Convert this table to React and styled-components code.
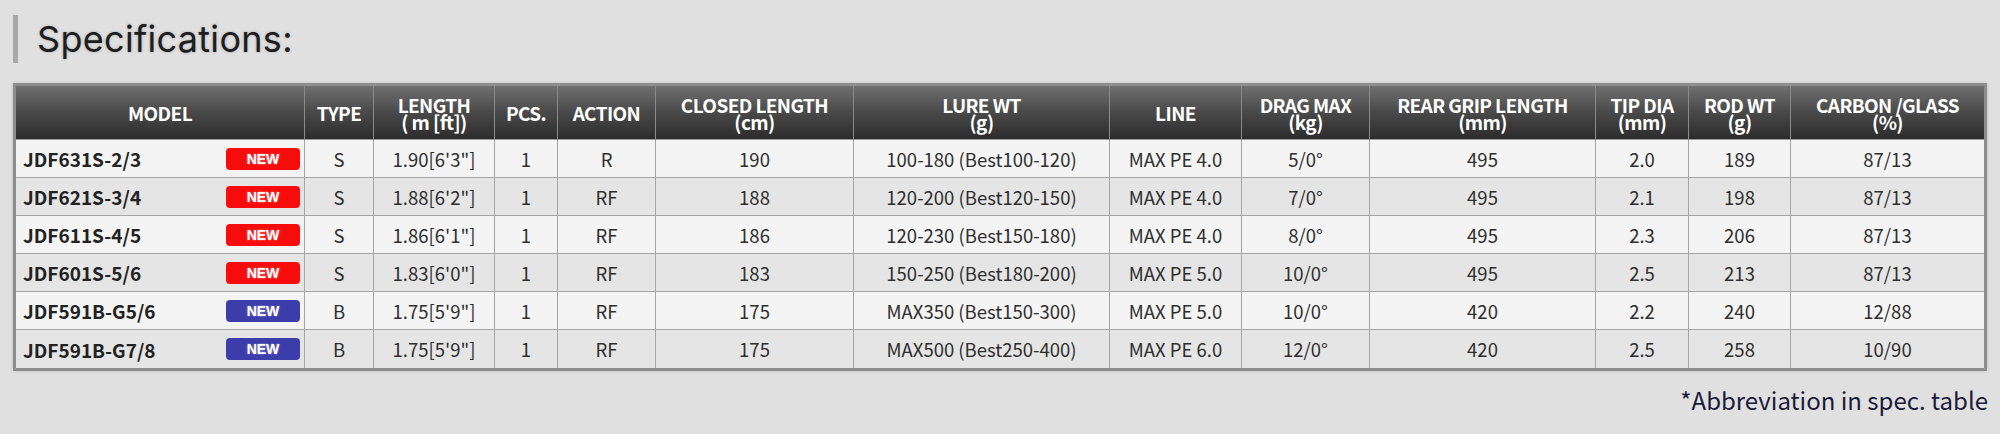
import React from 'react'
import styled, { createGlobalStyle } from 'styled-components'

const GlobalStyle = createGlobalStyle`
  body {
    margin: 0;
    background: #e0e0e0;
    font-family: "Noto Sans CJK JP", "Noto Sans", sans-serif;
  }
`

const Page = styled.div`
  padding: 15px 13px 0 13px;
`

const Title = styled.h2`
  margin: 0;
  height: 48px;
  display: flex;
  align-items: center;
  border-left: 5px solid #a8a8a8;
  padding-left: 19px;
  font-family: Inter, "Noto Sans", sans-serif;
  font-weight: 400;
  font-size: 36px;
  letter-spacing: 0.3px;
  color: #1e1e1e;
  text-shadow: 0 0 3px rgba(0, 0, 0, 0.25);
`

const Table = styled.table`
  margin-top: 20px;
  width: 1974px;
  table-layout: fixed;
  border-collapse: separate;
  border-spacing: 0;
  border: 3px solid #8e8e8e;
  box-shadow: 0 0 3px rgba(0, 0, 0, 0.15);
`

const HeadCell = styled.th`
  height: 54px;
  padding: 0 4px;
  box-sizing: border-box;
  background: linear-gradient(to bottom, #707070 0%, #4c4c4c 45%, #2c2c2c 100%);
  color: #fff;
  font-weight: 700;
  font-size: 19px;
  line-height: 17px;
  letter-spacing: -0.6px;
  text-align: center;
  vertical-align: middle;
  border-right: 1px solid #8a8a8a;
  border-bottom: 1px solid #9a9a9a;
  white-space: pre-line;

  &:last-child {
    border-right: none;
  }
`

const Row = styled.tr`
  background: ${p => (p.$odd ? '#f4f4f4' : '#e5e5e5')};

  &:last-child td {
    border-bottom: none;
  }
`

const Cell = styled.td`
  height: 38px;
  box-sizing: border-box;
  padding: 0 4px;
  text-align: center;
  vertical-align: middle;
  font-size: 18.5px;
  color: #2e2e2e;
  border-right: 1px solid #a6a6a6;
  border-bottom: 1px solid #a6a6a6;
  white-space: nowrap;

  &:last-child {
    border-right: none;
  }
`

const ModelCell = styled(Cell)`
  text-align: left;
  padding: 0 4px 0 7px;
`

const ModelInner = styled.div`
  display: flex;
  align-items: center;
  justify-content: space-between;
`

const ModelName = styled.span`
  font-weight: 700;
  color: #222;
  font-size: 19px;
`

const Badge = styled.span`
  width: 74px;
  height: 22px;
  border-radius: 4px;
  background: ${p => (p.$blue ? '#3333a8' : '#f80000')};
  color: #fff;
  font-family: "Liberation Sans", Arial, sans-serif;
  font-weight: 700;
  font-size: 14px;
  display: flex;
  align-items: center;
  justify-content: center;
  text-shadow: 0 0 2px rgba(255, 255, 255, 0.6);
  opacity: 0.95;
`

const Footnote = styled.p`
  margin: 11px 0 0 0;
  width: 1975px;
  text-align: right;
  font-size: 24px;
  color: #1a1a3a;
`

const columns = [
  { label: 'MODEL', width: 289 },
  { label: 'TYPE', width: 69 },
  { label: 'LENGTH\n( m [ft])', width: 121 },
  { label: 'PCS.', width: 63 },
  { label: 'ACTION', width: 98 },
  { label: 'CLOSED LENGTH\n(cm)', width: 198 },
  { label: 'LURE WT\n(g)', width: 256 },
  { label: 'LINE', width: 132 },
  { label: 'DRAG MAX\n(kg)', width: 128 },
  { label: 'REAR GRIP LENGTH\n(mm)', width: 226 },
  { label: 'TIP DIA\n(mm)', width: 93 },
  { label: 'ROD WT\n(g)', width: 102 },
  { label: 'CARBON /GLASS\n(%)', width: 193 },
]

const rows = [
  ['JDF631S-2/3', false, 'S', '1.90[6\'3"]', '1', 'R', '190', '100-180 (Best100-120)', 'MAX PE 4.0', '5/0°', '495', '2.0', '189', '87/13'],
  ['JDF621S-3/4', false, 'S', '1.88[6\'2"]', '1', 'RF', '188', '120-200 (Best120-150)', 'MAX PE 4.0', '7/0°', '495', '2.1', '198', '87/13'],
  ['JDF611S-4/5', false, 'S', '1.86[6\'1"]', '1', 'RF', '186', '120-230 (Best150-180)', 'MAX PE 4.0', '8/0°', '495', '2.3', '206', '87/13'],
  ['JDF601S-5/6', false, 'S', '1.83[6\'0"]', '1', 'RF', '183', '150-250 (Best180-200)', 'MAX PE 5.0', '10/0°', '495', '2.5', '213', '87/13'],
  ['JDF591B-G5/6', true, 'B', '1.75[5\'9"]', '1', 'RF', '175', 'MAX350 (Best150-300)', 'MAX PE 5.0', '10/0°', '420', '2.2', '240', '12/88'],
  ['JDF591B-G7/8', true, 'B', '1.75[5\'9"]', '1', 'RF', '175', 'MAX500 (Best250-400)', 'MAX PE 6.0', '12/0°', '420', '2.5', '258', '10/90'],
]

const App = () => (
  <Page>
    <GlobalStyle />
    <Title>Specifications:</Title>
    <Table>
      <colgroup>
        {columns.map(c => (
          <col key={c.label} style={{ width: c.width }} />
        ))}
      </colgroup>
      <thead>
        <tr>
          {columns.map(c => (
            <HeadCell key={c.label}>{c.label}</HeadCell>
          ))}
        </tr>
      </thead>
      <tbody>
        {rows.map(([model, blue, ...rest], i) => (
          <Row key={model} $odd={i % 2 === 0}>
            <ModelCell>
              <ModelInner>
                <ModelName>{model}</ModelName>
                <Badge $blue={blue}>NEW</Badge>
              </ModelInner>
            </ModelCell>
            {rest.map((v, j) => (
              <Cell key={j}>{v}</Cell>
            ))}
          </Row>
        ))}
      </tbody>
    </Table>
    <Footnote>*Abbreviation in spec. table</Footnote>
  </Page>
)

export default App
